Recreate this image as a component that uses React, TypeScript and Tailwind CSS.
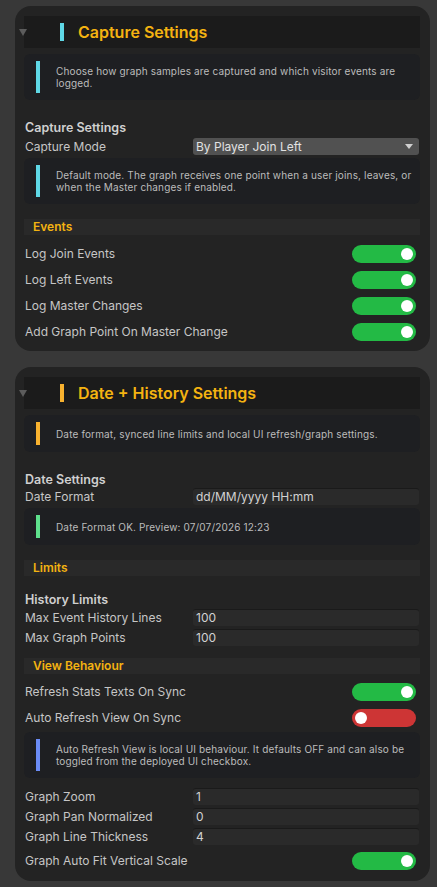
import React from "react";

const CYAN = "bg-[#5fd8e6]";

function Header({ title, bar }: { title: string; bar: string }) {
  return (
    <div className="relative">
      <span className="absolute -left-[5px] top-[13px] h-0 w-0 border-x-4 border-t-[7px] border-x-transparent border-t-[#5c5c5c]" />
      <div className="flex h-8 items-center bg-[#1b1b1b] pl-[36px]">
        <span className={`h-[18px] w-1 ${bar}`} />
        <h2 className="ml-[14px] text-[16px] font-semibold leading-none text-[#f4b311]">{title}</h2>
      </div>
    </div>
  );
}

function Info({ bar, className = "", children }: { bar: string; className?: string; children: React.ReactNode }) {
  return (
    <div className={`flex items-stretch rounded-md bg-[#1e1f22] py-[7px] pl-[12px] pr-2 ${className}`}>
      <span className={`min-h-[23px] w-1 shrink-0 ${bar}`} />
      <p className="ml-4 self-center py-1 text-[10px] leading-[12px] tracking-[0.15px] text-[#bcbcbc]">{children}</p>
    </div>
  );
}

function Section({ title, className = "" }: { title: string; className?: string }) {
  return (
    <div className={`flex h-4 items-center bg-[#292929] pl-[9px] ${className}`}>
      <span className="text-[12px] font-semibold leading-none text-[#f4b311]">{title}</span>
    </div>
  );
}

function SubLabel({ text, className = "" }: { text: string; className?: string }) {
  return <div className={`pl-px text-[12.5px] font-semibold leading-4 text-[#d0d0d0] ${className}`}>{text}</div>;
}

function Toggle({ label, on = true }: { label: string; on?: boolean }) {
  return (
    <div className="flex h-[26px] items-center justify-between pl-px pr-1">
      <span className="text-[12px] text-[#c6c6c6]">{label}</span>
      <span
        className={`flex h-[18px] w-16 items-center rounded-full ${
          on ? "justify-end bg-[#23ba45] pr-[3px]" : "justify-start bg-[#cd3535] pl-[3px]"
        }`}
      >
        <span className="h-3 w-3 rounded-full bg-white" />
      </span>
    </div>
  );
}

function Field({ label, value, className = "" }: { label: string; value: string; className?: string }) {
  return (
    <div className={`flex h-[17px] items-center pl-px pr-px ${className}`}>
      <span className="w-[168px] shrink-0 text-[12px] text-[#c6c6c6]">{label}</span>
      <div className="flex h-full flex-1 items-center rounded-[3px] border-t border-[#1a1a1a] bg-[#2a2a2a] pl-[3px] text-[12px] text-[#d2d2d2]">
        {value}
      </div>
    </div>
  );
}

export default function App() {
  return (
    <div className="min-h-[887px] bg-[#383838] pl-[15px] pr-[7px] pt-[6px] font-['Inter','Liberation_Sans',sans-serif]">
      {/* capture card */}
      <div className="rounded-2xl bg-[#232323] pb-[6px] pl-[9px] pr-[10px] pt-[10px]">
        <Header title="Capture Settings" bar={CYAN} />
        <Info bar={CYAN} className="mt-[6px]">
          Choose how graph samples are captured and which visitor events are logged.
        </Info>
        <SubLabel text="Capture Settings" className="mt-5" />
        <div className="mt-[2px] flex h-[17px] items-center pl-px pr-px">
          <span className="w-[168px] shrink-0 text-[12px] text-[#c6c6c6]">Capture Mode</span>
          <div className="flex h-full flex-1 items-center justify-between rounded-[3px] bg-[#515151] pl-[3px] pr-[6px] text-[12px] text-[#e2e2e2]">
            <span>By Player Join Left</span>
            <span className="h-0 w-0 border-x-[4px] border-t-[5px] border-x-transparent border-t-[#d0d0d0]" />
          </div>
        </div>
        <Info bar={CYAN} className="mt-[3px]">
          Default mode. The graph receives one point when a user joins, leaves, or when the Master changes if enabled.
        </Info>
        <Section title="Events" className="mt-[15px]" />
        <div className="mt-[6px]">
          <Toggle label="Log Join Events" />
          <Toggle label="Log Left Events" />
          <Toggle label="Log Master Changes" />
          <Toggle label="Add Graph Point On Master Change" />
        </div>
      </div>

      {/* date + history card */}
      <div className="mt-4 rounded-2xl bg-[#232323] pb-[7px] pl-[9px] pr-[10px] pt-[10px]">
        <Header title="Date + History Settings" bar="bg-[#f8b22f]" />
        <Info bar="bg-[#f8b22f]" className="mt-[6px]">
          Date format, synced line limits and local UI refresh/graph settings.
        </Info>
        <SubLabel text="Date Settings" className="mt-5" />
        <Field label="Date Format" value="dd/MM/yyyy HH:mm" />
        <Info bar="bg-[#5ee08c]" className="mt-[3px]">
          Date Format OK. Preview: 07/07/2026 12:23
        </Info>
        <Section title="Limits" className="mt-[15px]" />
        <SubLabel text="History Limits" className="mt-4" />
        <div className="mt-px flex flex-col gap-[3px]">
          <Field label="Max Event History Lines" value="100" />
          <Field label="Max Graph Points" value="100" />
        </div>
        <Section title="View Behaviour" className="mt-3" />
        <div className="mt-[5px]">
          <Toggle label="Refresh Stats Texts On Sync" />
          <Toggle label="Auto Refresh View On Sync" on={false} />
        </div>
        <Info bar="bg-[#6b8cf5]" className="mt-px">
          Auto Refresh View is local UI behaviour. It defaults OFF and can also be toggled from the deployed UI checkbox.
        </Info>
        <div className="mt-[10px] flex flex-col gap-[3px]">
          <Field label="Graph Zoom" value="1" />
          <Field label="Graph Pan Normalized" value="0" />
          <Field label="Graph Line Thickness" value="4" />
        </div>
        <div className="mt-[3px]">
          <Toggle label="Graph Auto Fit Vertical Scale" />
        </div>
      </div>
    </div>
  );
}
